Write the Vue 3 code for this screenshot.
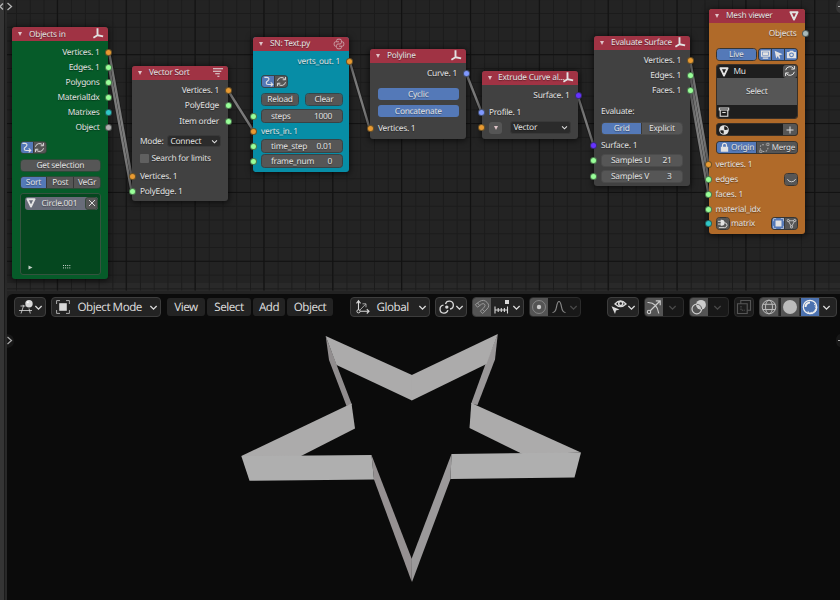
<script setup>
const wires = [
  'M109 52L131.5 176', 'M109 67L131.5 191', 'M228 90.5L253.5 131', 'M349.5 61L369.5 128',
  'M466 73L481.5 112', 'M577.5 95L593.5 145', 'M690 60L708.5 164', 'M690 75L708.5 179', 'M690 90L708.5 194',
]
const outputs = [
  ['Vertices. 1', 'orange'], ['Edges. 1', 'green'], ['Polygons', 'green'],
  ['MaterialIdx', 'green'], ['Matrixes', 'cyan'], ['Object', 'grey'],
]
const menus = ['View', 'Select', 'Add', 'Object']
</script>

<template>
  <svg class="defs" aria-hidden="true">
    <symbol id="i-axes" viewBox="0 0 12 12"><path d="M5.500 1.300V7M5.500 7.200L2.200 9.200M5.500 7.200L10.200 8.200" stroke="currentColor" stroke-width="1.900" fill="none" stroke-linecap="square" /></symbol>
    <symbol id="i-sort" viewBox="0 0 12 12"><path d="M1 1.800h10M1 4.300h8.300M3.200 6.800h4.600M5.400 9.300h2" stroke="currentColor" stroke-width="1.100" fill="none" /></symbol>
    <symbol id="i-mesh" viewBox="0 0 12 12"><path d="M2.400 2.200h7.200L6 9.600z" stroke="currentColor" stroke-width="1.900" fill="none" stroke-linejoin="round" /></symbol>
    <symbol id="i-python" viewBox="0 0 12 12"><path d="M3.600 3.800V2.600Q3.600 1.200 5 1.200H7Q8.400 1.200 8.400 2.600V4.600Q8.400 6 7 6H5Q3.600 6 3.600 7.400V8.200H2.600Q1.200 8.200 1.200 6.800V5.200Q1.200 3.800 2.600 3.800H6M8.400 3.800H9.400Q10.800 3.800 10.800 5.200V6.800Q10.800 8.200 9.400 8.200H6M8.400 8.200V9.400Q8.400 10.800 7 10.800H5Q3.600 10.800 3.600 9.400V8.200" stroke="currentColor" stroke-width="1" fill="none" /></symbol>
    <symbol id="i-flow" viewBox="0 0 12 12"><path d="M1.500 1.500H4.300Q6.500 1.500 6.500 3.400 6.500 4.600 5 5.400 3.500 6.200 3.500 7.500 3.500 9.200 5.600 9.200H10.500M8.400 7L10.700 9.200 8.400 11.300" stroke="currentColor" stroke-width="1.200" fill="none" /></symbol>
    <symbol id="i-refresh" viewBox="0 0 12 12"><path d="M1.600 5.200A4.500 4.500 0 0 1 9.700 3.600M10.400 1v3.100H7.300M10.400 6.800A4.500 4.500 0 0 1 2.300 8.400M1.600 11V7.900h3.100" stroke="currentColor" stroke-width="1" fill="none" /></symbol>
    <symbol id="i-chev" viewBox="0 0 10 10"><path d="M1.500 3.300L5 6.800 8.500 3.300" stroke="currentColor" stroke-width="1.500" fill="none" /></symbol>
    <symbol id="i-screen" viewBox="0 0 12 12"><path d="M1.700 2.200h8.600v5.600H1.700z" stroke="currentColor" stroke-width="1.400" fill="none" /><path d="M3 3.500h6v3H3zM3 9.300h6v1.200H3z" fill="currentColor" /></symbol>
    <symbol id="i-cursor" viewBox="0 0 12 12"><path d="M1.800 1.800L10.500 5.800 6.800 6.900 8 10 6.500 10.600 5.300 7.600 3.500 10.300z" fill="currentColor" /></symbol>
    <symbol id="i-camera" viewBox="0 0 12 12"><path fill-rule="evenodd" d="M1 3.200H3.500L4.300 1.800H7.700L8.500 3.200H11V10H1zM6 3.800A2.600 2.600 0 1 0 6 9 2.600 2.600 0 0 0 6 3.800z" fill="currentColor" /><circle cx="6" cy="6.400" r="1.500" fill="currentColor" /></symbol>
    <symbol id="i-box" viewBox="0 0 12 12"><path d="M1.300 2h9.400v2H1.300zM2.200 4.500v5.800h7.600V4.500M4.300 6.500h3.400" stroke="currentColor" stroke-width="1.100" fill="none" /></symbol>
    <symbol id="i-material" viewBox="0 0 12 12"><circle cx="6" cy="6" r="4.800" fill="currentColor" /><path d="M6.200 2.200Q9.800 2.500 9.900 5.600Q7.500 6.600 6.200 5.500zM2.200 6.400Q4 5.800 5.700 6.600V9.800Q2.600 9.500 2.200 6.400z" fill="#1e1e1e" /></symbol>
    <symbol id="i-lock" viewBox="0 0 12 12"><path d="M2 5.300h8v5.400H2z" fill="currentColor" /><path d="M3.800 5.500V3.700a2.200 2.200 0 0 1 4.400 0V5.500" stroke="currentColor" stroke-width="1.300" fill="none" /></symbol>
    <symbol id="i-merge" viewBox="0 0 12 12"><path d="M1.500 8.500V5.500Q1.500 3 4.500 3H7M4 10.300H6.500Q9.500 10 9.800 6" stroke="currentColor" stroke-width="1.100" stroke-dasharray="1.800 1.400" fill="none" /><path d="M8.500 1.400h2.400v2.400H8.500zM.8 9h2.400v2.400H.8z" fill="none" stroke="currentColor" stroke-width=".9" /></symbol>
    <symbol id="i-smile" viewBox="0 0 12 12"><path d="M1.500 5.500Q2.600 8.500 6 8.500T10.500 5.500" stroke="currentColor" stroke-width=".9" fill="none" /></symbol>
    <symbol id="i-plug" viewBox="0 0 12 12"><path d="M1 3.600h3.500M1 6.600h3.500" stroke="currentColor" stroke-width="1" /><path d="M4 1.800h1a3.200 3.200 0 0 1 0 6.600H4z" fill="currentColor" /><path d="M8 5.100Q11 5.300 11 7.800T8.300 10.500H2" stroke="currentColor" stroke-width="1" fill="none" /></symbol>
    <symbol id="i-object" viewBox="0 0 14 14"><path d="M3.200 3.200h7.600v7.600H3.200z" fill="currentColor" /><path d="M.6 4V.6H4M10 .6h3.400V4M13.400 10v3.400H10M4 13.400H.6V10" stroke="currentColor" stroke-width="1" fill="none" opacity=".75" /></symbol>
    <symbol id="i-tri" viewBox="0 0 12 12"><path d="M2.500 3L6 9.500 9.500 3z" stroke="currentColor" stroke-width=".8" fill="none" /><g fill="#545454" stroke="currentColor" stroke-width=".8"><circle cx="2.500" cy="2.800" r="1.200" /><circle cx="9.500" cy="2.800" r="1.200" /><circle cx="6" cy="9.700" r="1.200" /></g></symbol>
    <symbol id="i-editor" viewBox="0 0 16 16"><path d="M2.500 7h5M1 11.500h13M5.500 7L3 14.500M11 9.500L12.300 14.500M5 5.800L5.500 7" stroke="currentColor" stroke-width="1" fill="none" opacity=".8" /><circle cx="11" cy="4.700" r="3.700" fill="currentColor" /><circle cx="9.800" cy="3.300" r="1" fill="#fff" /></symbol>
    <symbol id="i-orient" viewBox="0 0 16 16"><path d="M3.500 2.500V12.300H13.500M1.500 4.300L3.500 1.700 5.500 4.300M11.800 10.200L14 12.300 11.800 14.500" stroke="currentColor" stroke-width="1.100" fill="none" /><path d="M4 12L10.500 5.300M7.500 4.800h3.500v3.500" stroke="currentColor" fill="none" opacity=".7" /><circle cx="3.500" cy="12.300" r="1.600" fill="#232323" stroke="currentColor" /></symbol>
    <symbol id="i-pivot" viewBox="0 0 16 16"><path d="M8.900 11.200A4 4 0 1 1 4.500 6.200M6.500 5A4 4 0 1 1 11 10" stroke="currentColor" stroke-width="1.300" fill="none" /><circle cx="7.800" cy="8.100" r="1.700" fill="currentColor" /></symbol>
    <symbol id="i-magnet" viewBox="0 0 16 16"><path d="M1.300 5.600L5.400 2.600Q9.600-.2 13 3.300T13 10L8.700 14.500 6.300 12.200 10.400 8Q11.700 6.400 10.500 5.200T7.600 5.100L3.500 8.200zM3.500 4L5.700 6.600M10.600 12.500L8.300 10.200" stroke="currentColor" stroke-width="1" fill="none" /></symbol>
    <symbol id="i-snap" viewBox="0 0 16 16"><path d="M1 7.500v7M13.500 7.500v7M1 11h12.500M4.200 9v4M7.300 9v4M10.400 9v4" stroke="currentColor" stroke-width="1.100" fill="none" /><path d="M11 1h4v4h-4z" fill="currentColor" /></symbol>
    <symbol id="i-prop" viewBox="0 0 16 16"><circle cx="8" cy="8" r="6.500" stroke="currentColor" fill="none" opacity=".4" /><circle cx="8" cy="8" r="2.200" fill="currentColor" /></symbol>
    <symbol id="i-curve" viewBox="0 0 16 16"><path d="M1.500 13.500Q4.500 13.500 5.500 8T8 2.500 10.500 8 14.500 13.500" stroke="currentColor" stroke-width="1.200" fill="none" /></symbol>
    <symbol id="i-eye" viewBox="0 0 16 16"><path d="M4 5Q9.500-1.200 15 5 9.500 10.300 4 5z" stroke="currentColor" stroke-width="1.300" fill="none" /><circle cx="9.700" cy="4.600" r="2" stroke="currentColor" stroke-width="1.500" fill="none" /><path d="M.5 7.300L8.500 10.500 5 11.500 4 15z" fill="currentColor" /></symbol>
    <symbol id="i-gizmo" viewBox="0 0 16 16"><path d="M4 12L14 2M9.800 1.800H14.200V6.200M1.500 3.500Q11 3 12.800 14.500" stroke="currentColor" stroke-width="1.200" fill="none" /><circle cx="3" cy="13" r="1.700" stroke="currentColor" stroke-width="1.100" fill="#545454" /></symbol>
    <symbol id="i-overlay" viewBox="0 0 16 16"><circle cx="10" cy="5.800" r="4.900" fill="currentColor" /><circle cx="5.800" cy="10" r="4.800" fill="none" stroke="currentColor" stroke-width="1.200" /><path d="M5.800 5.300A5 5 0 0 1 10.600 10" stroke="#666" fill="none" /></symbol>
    <symbol id="i-xray" viewBox="0 0 16 16"><path d="M1.500 4.800h9.700v9.700H1.500zM4.800 4.500V1.500h9.700v9.700H11.500" stroke="currentColor" stroke-width="1.100" fill="none" /><path d="M5 7v4.200h4" stroke="currentColor" stroke-dasharray="1.500 1" fill="none" /></symbol>
    <symbol id="i-wire" viewBox="0 0 16 16"><g stroke="currentColor" stroke-width="1" fill="none"><circle cx="8" cy="8" r="6.800" /><ellipse cx="8" cy="8" rx="3.500" ry="6.800" /><path d="M1.800 5.300h12.400M1.800 10.500h12.400" /></g></symbol>
    <symbol id="i-solid" viewBox="0 0 16 16"><circle cx="8" cy="8" r="7" fill="currentColor" /></symbol>
    <symbol id="i-render" viewBox="0 0 16 16"><circle cx="8" cy="8" r="6.700" stroke="currentColor" stroke-width="1.200" fill="none" /><path d="M3.500 8A4.500 4.500 0 0 1 8 3.500" stroke="currentColor" stroke-width="2" fill="none" /><path d="M12.600 5A5.200 5.200 0 0 1 5 12.600" stroke="currentColor" stroke-width="2.200" stroke-dasharray="1 .8" fill="none" /></symbol>
  </svg>

  <div class="app">
    <aside class="gutter"></aside>
    <section class="nodes">
      <svg class="backdrop" width="840" height="294">
        <defs>
          <pattern id="minor" x="2.220" y="-.800" width="13.770" height="13.770" patternUnits="userSpaceOnUse"><path d="M.5 0V13.770M0 .5H13.770" stroke="#1b1b1b" stroke-width="1" /></pattern>
          <pattern id="major" x="56.800" y="54.200" width="68.850" height="68.850" patternUnits="userSpaceOnUse"><path d="M.5 0V68.850M0 .5H68.850" stroke="#111" stroke-width="1" /></pattern>
        </defs>
        <rect x="7" y="283" width="833" height="8" fill="#292929" />
        <rect x="7" width="833" height="290.500" fill="url(#minor)" />
        <rect x="7" width="833" height="290.500" fill="url(#major)" />
        <g fill="none" stroke="#151515" stroke-opacity=".6" stroke-width="4"><path v-for="w in wires" :key="w" :d="w" /></g>
        <g fill="none" stroke="#7b7b7b" stroke-width="2.400"><path v-for="w in wires" :key="w" :d="w" /></g>
        <path d="M3 3.500L0 6.500 3 9.500M7.500 3L11.500 6.500 7.500 10" stroke="#b5b5b5" stroke-width="1.300" fill="none" />
        <path d="M840 0q-4 1-4 6.500t4 6.500z" fill="#353535" /><path d="M838 6.500h3" stroke="#aaa" />
      </svg>

      <article class="node n1">
        <header><i class="down"></i><b>Objects in</b><svg><use href="#i-axes" /></svg></header>
        <div class="body">
          <div v-for="[label, c] in outputs" :key="label" class="row out">{{ label }}<i class="dot" :class="c"></i></div>
          <div class="row tools"><span class="group"><span class="cell on"><svg><use href="#i-flow" /></svg></span><span class="cell"><svg><use href="#i-refresh" /></svg></span></span></div>
          <div class="row get"><span class="group fill"><span class="cell">Get selection</span></span></div>
          <div class="row seg"><span class="group fill"><span class="cell on">Sort</span><span class="cell">Post</span><span class="cell">VeGr</span></span></div>
          <div class="list">
            <div class="entry"><svg><use href="#i-mesh" /></svg><span>Circle.001</span><i><svg viewBox="0 0 8 8"><path d="M1 1L7 7M7 1L1 7" stroke="#ddd" /></svg></i></div>
            <div class="listfoot"><svg class="play" viewBox="0 0 5 5"><path d="M.5 .5L4.500 2.500 .5 4.500z" fill="#c4cfc7" /></svg><svg class="grip" viewBox="0 0 8 4"><path d="M0 .5h8M0 2.900h8" stroke="#cfd8d2" stroke-dasharray="1 1.100" /></svg></div>
          </div>
        </div>
      </article>

      <article class="node n2">
        <header><i class="down"></i><b>Vector Sort</b><svg><use href="#i-sort" /></svg></header>
        <div class="body">
          <div class="row out">Vertices. 1<i class="dot orange"></i></div>
          <div class="row out">PolyEdge<i class="dot green"></i></div>
          <div class="row out item">Item order<i class="dot green"></i></div>
          <div class="row mode">Mode:<span class="select">Connect<svg><use href="#i-chev" /></svg></span></div>
          <div class="row check"><i></i>Search for limits</div>
          <div class="row">Vertices. 1<i class="dot in orange"></i></div>
          <div class="row">PolyEdge. 1<i class="dot in green"></i></div>
        </div>
      </article>

      <article class="node n3">
        <header><i class="down"></i><b>SN: Text.py</b><svg class="dim"><use href="#i-python" /></svg></header>
        <div class="body">
          <div class="row out">verts_out. 1<i class="dot orange"></i></div>
          <div class="row tools"><span class="group"><span class="cell on"><svg><use href="#i-flow" /></svg></span><span class="cell"><svg><use href="#i-refresh" /></svg></span></span></div>
          <div class="row pair"><span class="group"><span class="cell">Reload</span></span><span class="group"><span class="cell">Clear</span></span></div>
          <div class="row steps"><span class="num"><span>steps</span><span>1000</span></span><i class="dot in green"></i></div>
          <div class="row vin">verts_in. 1<i class="dot in orange"></i></div>
          <div class="row"><span class="num"><span>time_step</span><span>0.01</span></span><i class="dot in green"></i></div>
          <div class="row"><span class="num"><span>frame_num</span><span>0</span></span><i class="dot in green"></i></div>
        </div>
      </article>

      <article class="node n4">
        <header><i class="down"></i><b>Polyline</b><svg><use href="#i-axes" /></svg></header>
        <div class="body">
          <div class="row out">Curve. 1<i class="dot periwinkle"></i></div>
          <div class="row first"><span class="pill">Cyclic</span></div>
          <div class="row second"><span class="pill">Concatenate</span></div>
          <div class="row last">Vertices. 1<i class="dot in orange"></i></div>
        </div>
      </article>

      <article class="node n5">
        <header><i class="down"></i><b>Extrude Curve al...</b><svg><use href="#i-axes" /></svg></header>
        <div class="body">
          <div class="row out">Surface. 1<i class="dot violet"></i></div>
          <div class="row profile">Profile. 1<i class="dot in periwinkle"></i></div>
          <div class="row vec"><span class="mini"><i class="down"></i></span><span class="select">Vector<svg><use href="#i-chev" /></svg></span><i class="dot in orange"></i></div>
        </div>
      </article>

      <article class="node n6">
        <header><i class="down"></i><b>Evaluate Surface</b><svg><use href="#i-axes" /></svg></header>
        <div class="body">
          <div class="row out">Vertices. 1<i class="dot orange"></i></div>
          <div class="row out">Edges. 1<i class="dot green"></i></div>
          <div class="row out">Faces. 1<i class="dot green"></i></div>
          <div class="row eval">Evaluate:</div>
          <div class="row segs"><span class="group flat fill"><span class="cell on">Grid</span><span class="cell">Explicit</span></span></div>
          <div class="row surf">Surface. 1<i class="dot in violet"></i></div>
          <div class="row"><span class="num flat"><span>Samples U</span><span>21</span></span><i class="dot in green"></i></div>
          <div class="row sv"><span class="num flat"><span>Samples V</span><span>3</span></span><i class="dot in green"></i></div>
        </div>
      </article>

      <article class="node n7">
        <header><i class="down"></i><b>Mesh viewer</b><svg><use href="#i-mesh" /></svg></header>
        <div class="body">
          <div class="row out">Objects<i class="dot pale"></i></div>
          <div class="row live"><span class="group livebtn"><span class="cell on">Live</span></span><span class="group fill"><span class="cell on"><svg><use href="#i-screen" /></svg></span><span class="cell on"><svg><use href="#i-cursor" /></svg></span><span class="cell on"><svg><use href="#i-camera" /></svg></span></span></div>
          <div class="picker">
            <div class="dark"><svg><use href="#i-mesh" /></svg><span>Mu</span><i><svg><use href="#i-refresh" /></svg></i></div>
            <div class="selectbtn">Select</div>
            <div class="dark"><svg><use href="#i-box" /></svg></div>
          </div>
          <div class="material"><svg><use href="#i-material" /></svg><i><svg viewBox="0 0 10 10"><path d="M5 1.500v7M1.500 5h7" stroke="#ddd" /></svg></i></div>
          <div class="row origin"><span class="group fill"><span class="cell on"><svg><use href="#i-lock" /></svg>Origin</span><span class="cell merge"><svg class="soft"><use href="#i-merge" /></svg>Merge</span></span></div>
          <div class="row ver">vertices. 1<i class="dot in orange"></i></div>
          <div class="row between">edges<span class="group one"><span class="cell"><svg><use href="#i-smile" /></svg></span></span><i class="dot in green"></i></div>
          <div class="row">faces. 1<i class="dot in green"></i></div>
          <div class="row">material_idx<i class="dot in green"></i></div>
          <div class="row matrix"><span class="group one"><span class="cell"><svg><use href="#i-plug" /></svg></span></span><span class="grow">matrix</span><span class="group two"><span class="cell on"><svg><use href="#i-object" /></svg></span><span class="cell"><svg><use href="#i-tri" /></svg></span></span><i class="dot in cyan"></i></div>
        </div>
      </article>
    </section>

    <section class="viewport">
      <nav class="bar">
        <span class="ctl w32"><svg><use href="#i-editor" /></svg><svg class="ch"><use href="#i-chev" /></svg></span>
        <span class="ctl mode3d"><svg><use href="#i-object" /></svg><span>Object Mode</span><svg class="ch"><use href="#i-chev" /></svg></span>
        <span class="menus"><span v-for="m in menus" :key="m" :class="'m-' + m.toLowerCase()">{{ m }}</span></span>
        <span class="ctl global"><svg><use href="#i-orient" /></svg><span>Global</span><svg class="ch"><use href="#i-chev" /></svg></span>
        <span class="ctl w32"><svg><use href="#i-pivot" /></svg><svg class="ch"><use href="#i-chev" /></svg></span>
        <span class="ctl split w52"><span class="sq mute"><svg><use href="#i-magnet" /></svg></span><svg><use href="#i-snap" /></svg><svg class="ch"><use href="#i-chev" /></svg></span>
        <span class="ctl split w52 faded"><span class="sq lit"><svg><use href="#i-prop" /></svg></span><svg><use href="#i-curve" /></svg><svg class="ch off"><use href="#i-chev" /></svg></span>
        <span class="ctl w32 eye"><svg><use href="#i-eye" /></svg><svg class="ch"><use href="#i-chev" /></svg></span>
        <span class="ctl split w40 faded"><span class="sq lit"><svg><use href="#i-gizmo" /></svg></span><svg class="ch off"><use href="#i-chev" /></svg></span>
        <span class="ctl split w40 faded"><span class="sq lit"><svg><use href="#i-overlay" /></svg></span><svg class="ch off"><use href="#i-chev" /></svg></span>
        <span class="ctl xray"><svg><use href="#i-xray" /></svg></span>
        <span class="ctl split shade"><span class="sq"><svg><use href="#i-wire" /></svg></span><span class="sq"><svg><use href="#i-solid" /></svg></span><span class="sq active"><svg><use href="#i-render" /></svg></span><svg class="ch"><use href="#i-chev" /></svg></span>
      </nav>
      <svg class="scene" viewBox="7 320 833 280">
        <path d="M7 334q7 1 7 7t-7 7z" fill="#171717" /><path d="M7.500 337L11.500 340.500 7.500 344" stroke="#aaa" stroke-width="1.200" fill="none" />
        <path d="M840 334q-4 1-4 6.500t4 6.500z" fill="#171717" /><path d="M838 340.500h2" stroke="#aaa" />
        <g fill="#918d8e">
          <path d="M325.700 336L336.500 364.500 352 405 346.500 406 329 360z" />
          <path d="M497.800 334L495 359.500 477.500 405 471 404 485.500 364z" fill="#9a9798" />
          <path d="M371.500 455L374 479.500 411.800 582 411.800 559z" fill="#969192" />
          <path d="M451.500 454L450.500 479 412 582 411.500 559z" fill="#9b999a" />
        </g>
        <g fill="#acabab">
          <path d="M325.700 336L412 375V400.500L336.500 365z" /><path d="M411.800 375L497.800 334 486.500 364 411.800 400.500z" />
          <path d="M351.500 403.500L355 428.500 301 456H241.300z" /><path d="M471.300 403L469.500 428 523.500 454.500 581 452.500z" />
          <path d="M241.300 456L371.500 455 374 479.500 249.500 480.700z" fill="#afafaf" /><path d="M451.500 454L581 452.500 574.500 477.500 450.500 479z" fill="#afafaf" />
        </g>
      </svg>
    </section>
  </div>
</template>

<style>
body { margin: 0; background: #232323; overflow: hidden; }
</style>

<style scoped>
* { box-sizing: border-box; }
.defs { position: absolute; width: 0; height: 0; }
.app { width: 840px; height: 600px; overflow: hidden; background: #232323; display: grid; grid-template: 294px 306px / 7px 833px; position: relative; font-family: "Noto Sans", "Open Sans", sans-serif; font-size: 8.400px; letter-spacing: -.26px; color: #e2e2e2; text-rendering: geometricPrecision; }
.gutter { grid-row: 1 / 3; background: linear-gradient(90deg, #353535 0 4px, #1b1b1b 4px 5px, #292929 5px 7px); }
.nodes { grid-column: 2; }
.backdrop { position: absolute; left: 0; top: 0; }
.node { position: absolute; width: 96px; border-radius: 3px; background: #414141; box-shadow: 0 1px 6px 1px #0009; text-shadow: 0 1px 1px #0006; }
.node header { display: flex; align-items: center; height: 13.500px; padding: 0 4px 0 6px; border-radius: 3px 3px 0 0; background: #a03344; }
.node header b { flex: 1; font-weight: 400; margin-left: 7px; white-space: nowrap; }
.node header svg { width: 12px; height: 12px; flex: none; }
.dim { opacity: .6; }
.down { width: 0; height: 0; border: 2.500px solid transparent; border-top: 4px solid #dfc4c8; border-bottom: 0; flex: none; }
.body { padding: 3.500px 7.500px 0 8px; }
.row { height: 15px; display: flex; align-items: center; position: relative; white-space: nowrap; }
.out { justify-content: flex-end; padding-right: 1.500px; }
.dot { position: absolute; width: 7px; height: 7px; right: -11px; top: 4px; border: 1px solid #1d242099; background-clip: border-box; border-radius: 50%; }
.dot.in { left: -11px; right: auto; }
.orange { background: #e89a32; }
.green { background: #99ff99; }
.cyan { background: #30c8c8; }
.grey { background: #b0b0b0; }
.pale { background: #a9baba; }
.periwinkle { background: #8099ff; }
.violet { background: #6633ff; }
.group { display: flex; height: 13px; border: 1px solid #353535; border-radius: 3.500px; overflow: hidden; background: #383838; gap: 1px; }
.fill { flex: 1; }
.cell { display: flex; flex: 1; align-items: center; justify-content: center; background: #565656; min-width: 12px; }
.on { background: #5479b8; }
.cell svg { width: 11px; height: 11px; flex: none; }
.select { display: flex; align-items: center; justify-content: space-between; height: 12.500px; border: 1px solid #393939; border-radius: 3px; background: #2b2b2b; padding: 0 2px 0 3px; }
.select svg { width: 7px; height: 7px; }
.num { flex: 1; height: 13.500px; display: flex; align-items: center; justify-content: space-between; padding: 0 10px 0 9px; border: 1px solid #3a4345; border-radius: 3.500px; background: #565656; }
.flat { border-color: #4b4b4b; }
.num.flat { height: 12.500px; }

.n1 { left: 12px; top: 27px; height: 252px; background: #065b29; }
.n1 header { height: 14px; }
.n1 .body { padding-right: 7px; padding-left: 7.500px; }
.n1 .group { border-color: #2c4b38; }
.n1 .tools { margin-top: 5.500px; }
.n1 .get { margin-top: 2.500px; }
.n1 .seg { margin-top: 2.500px; }
.list { margin-top: 3px; height: 81.500px; border: 1px solid #35533f; border-radius: 3px; background: #05471f; padding: 3px 2px 4px 4px; display: flex; flex-direction: column; justify-content: space-between; }
.entry { display: flex; height: 12.500px; align-items: center; background: #686c79; border-radius: 3px; overflow: hidden; }
.entry > svg { width: 12px; height: 12px; }
.entry span { flex: 1; margin-left: 5px; }
.entry i { width: 13px; height: 12.500px; background: #565656; border: 1px solid #36493c; border-radius: 3px; display: grid; place-items: center; }
.entry i svg { width: 8px; height: 8px; }
.listfoot { display: flex; height: 5px; align-items: center; }
.play { width: 5px; height: 5px; margin-left: 3px; }
.grip { width: 8px; height: 4px; margin-left: 30.500px; }

.n2 { left: 132px; top: 66px; height: 135px; }
.n2 .item { margin-top: .500px; }
.n2 .mode { margin-top: 5px; justify-content: space-between; }
.n2 .select { width: 54px; }
.check { margin-top: 2px; margin-bottom: 3px; }
.check i { width: 9px; height: 9px; background: #606060; border-radius: 1px; margin-right: 2.500px; }

.n3 { left: 253px; top: 37px; height: 134.500px; background: #078da6; }
.n3 .body { padding-right: 6px; }
.n3 .out { padding-right: 3px; }
.n3 .tools { margin-top: 5px; }
.n3 .dot { right: -9.500px; }
.n3 .dot.in { right: auto; }
.pair { justify-content: space-between; margin-top: 2.500px; }
.pair .group { width: 38px; }
.steps { margin-top: 2px; }
.n3 .group { border-color: #35464a; }
.n3 .num { padding-left: 9px; }

.n4 { left: 370px; top: 49px; height: 89.500px; }
.first { margin-top: 5.500px; }
.second { margin-top: 2px; }
.n4 .last { margin-top: 2px; }
.pill { flex: 1; height: 12.500px; border-radius: 3px; background: #5479b8; display: grid; place-items: center; }

.n5 { left: 482px; top: 71px; height: 67.500px; }
.n5 header b { margin-left: 6px; }
.n5 header svg { margin-left: -3px; }
.n5 .body { padding-left: 7px; padding-right: 7px; }
.profile { margin-top: 2px; }
.vec { justify-content: space-between; }
.vec .select { width: 61.500px; height: 12.500px; }
.mini { width: 13px; height: 12px; background: #555; border-radius: 3px; display: grid; place-items: center; }

.n6 { left: 594px; top: 36px; height: 150px; }
.n6 .body { padding-left: 7px; padding-right: 7.500px; }
.eval { margin-top: 6px; }
.segs { margin-top: 2px; }
.surf { margin-top: 2px; }
.sv { margin-top: 1px; }
.n7 { left: 709px; top: 9px; height: 225px; background: #b06a29; }
.n7 .body { padding-left: 6.500px; padding-right: 7px; }
.n7 header svg { margin-right: 1px; }
.live { margin-top: 6px; gap: 1px; }
.livebtn { width: 41.500px; }
.picker { margin-top: 2px; height: 55px; border: 1px solid #3a3027; border-radius: 3px; overflow: hidden; display: grid; grid-template-rows: 13px 27px 13px; }
.dark { background: #1e1e1e; display: flex; align-items: center; }
.dark svg { width: 12px; height: 12px; margin-left: 1px; }
.dark span { flex: 1; margin-left: 4px; }
.dark i { width: 14px; height: 13px; background: #545454; border-radius: 3px; }
.selectbtn { background: #565656; display: grid; place-items: center; }
.material { margin-top: 4px; height: 13px; border: 1px solid #3a3027; border-radius: 3px; background: #1e1e1e; display: flex; align-items: center; justify-content: space-between; overflow: hidden; }
.material svg { width: 12px; height: 12px; margin-left: 1px; }
.material i { width: 14px; height: 11px; background: #565656; display: grid; place-items: center; }
.material i svg { width: 10px; height: 10px; margin: 0; }
.origin { margin-top: 3.500px; }
.origin svg { margin-right: 1.500px; }
.cell.merge { font-size: 8px; }
.soft { opacity: .6; }
.ver { margin-top: 2px; }
.between { justify-content: space-between; }
.one { width: 14px; }
.two { width: 27px; }
.grow { flex: 1; margin-left: 1.500px; }
.matrix { margin-top: -.500px; }

.viewport { grid-column: 2; background: #0b0b0b; border-radius: 6px 0 0; position: relative; display: flex; flex-direction: column; }
.bar { height: 26px; padding: 3px 3px 3px 7px; display: flex; font-size: 11.600px; letter-spacing: -.480px; color: #d9d9d9; }
.ctl { height: 20px; border: 1px solid #3d3d3d; border-radius: 4px; background: #232323; display: flex; align-items: center; margin-right: 5px; flex: none; }
.ctl svg { width: 16px; height: 16px; flex: none; }
.ctl .ch { width: 9px; height: 9px; }
.ctl.w32 { width: 32px; padding: 0 2px 0 3px; justify-content: space-between; }
.ctl.mode3d { width: 110px; padding: 0 2px 0 4px; margin-right: 6px; }
.mode3d svg:first-child { width: 14px; height: 14px; }
.mode3d span { flex: 1; margin-left: 7.500px; }
.menus { display: flex; gap: 2px; width: 183px; }
.menus span { height: 18px; margin-top: 1px; border-radius: 3px; background: #232323; display: grid; place-items: center; }
.m-view { width: 38px; }
.m-select { width: 44px; }
.m-add { width: 32px; }
.m-object { width: 46px; }
.global { width: 80px; padding: 0 2px 0 4px; }
.global span { flex: 1; margin-left: 5.500px; }
.split { overflow: hidden; justify-content: space-between; padding-right: 2px; }
.w52 { width: 52px; }
.w40 { width: 40px; }
.w40 .ch { margin-right: 4px; }
.sq { height: 18px; width: 18px; background: #545454; display: grid; place-items: center; }
.mute { color: #999; }
.faded { background: #181818; border-color: #2b2b2b; color: #888; }
.lit { color: #ccc; }
.ctl .off { color: #494949; }
.eye { margin-left: 21px; }
.xray { width: 20px; background: #1c1c1c; border-color: #2b2b2b; color: #555; padding-left: 1px; }
.shade { width: 78px; margin-right: 0; padding-right: 5px; }
.shade .sq { width: 19px; color: #bbb; border-right: 1px solid #333; }
.shade .active { background: #4c72b0; color: #eee; }
.scene { width: 833px; height: 280px; }
</style>
